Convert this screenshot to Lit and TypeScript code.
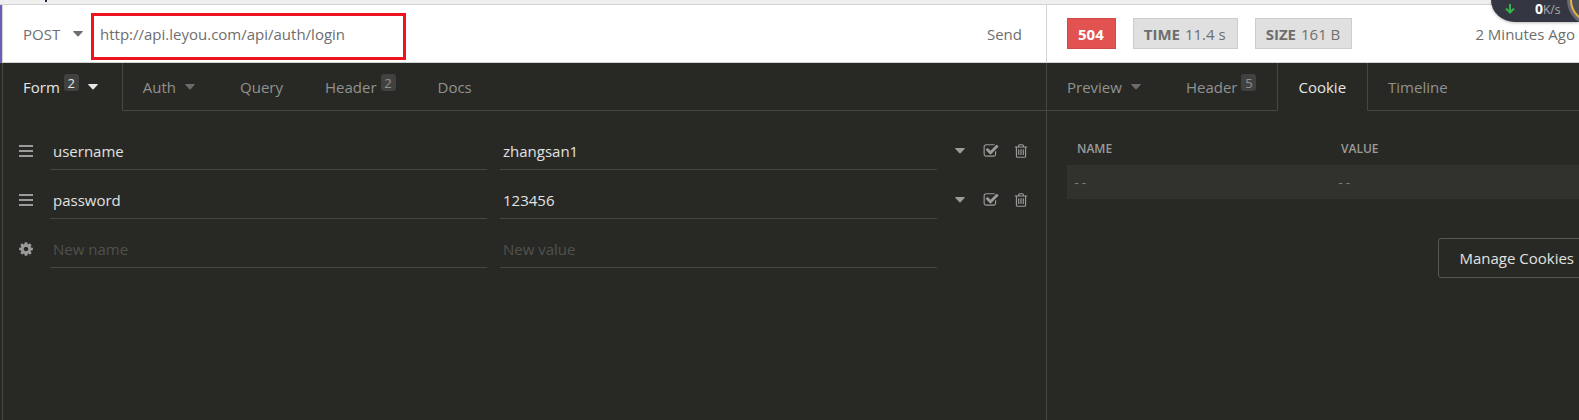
import { LitElement, html, css, svg, nothing } from "lit";
import { customElement, property, state } from "lit/decorators.js";
import { classMap } from "lit/directives/class-map.js";

const CHECK =
  "M1472 930v318q0 119-84.5 203.5t-203.5 84.5h-832q-119 0-203.5-84.5t-84.5-203.5v-832q0-119 84.5-203.5t203.5-84.5h832q63 0 117 25 15 7 18 23 3 17-9 29l-49 49q-10 10-23 10-3 0-9-2-23-6-45-6h-832q-66 0-113 47t-47 113v832q0 66 47 113t113 47h832q66 0 113-47t47-113v-254q0-13 9-22l64-64q10-10 23-10 6 0 12 3 20 8 20 29zm231-489l-814 814q-24 24-57 24t-57-24l-430-430q-24-24-24-57t24-57l110-110q24-24 57-24t57 24l263 263 647-647q24-24 57-24t57 24l110 110q24 24 24 57t-24 57z";
const TRASH =
  "M704 736v576q0 14-9 23t-23 9h-64q-14 0-23-9t-9-23v-576q0-14 9-23t23-9h64q14 0 23 9t9 23zm256 0v576q0 14-9 23t-23 9h-64q-14 0-23-9t-9-23v-576q0-14 9-23t23-9h64q14 0 23 9t9 23zm256 0v576q0 14-9 23t-23 9h-64q-14 0-23-9t-9-23v-576q0-14 9-23t23-9h64q14 0 23 9t9 23zm128 724v-948h-896v948q0 22 7 40.5t14.5 27 10.5 8.5h832q3 0 10.5-8.5t14.5-27 7-40.5zm-672-1076h448l-48-117q-7-9-17-11h-317q-10 2-17 11zm928 32v64q0 14-9 23t-23 9h-96v948q0 83-47 143.5t-113 60.5h-832q-66 0-113-58.5t-47-141.5v-952h-96q-14 0-23-9t-9-23v-64q0-14 9-23t23-9h309l70-167q15-37 54-63t79-26h320q40 0 79 26t54 63l70 167h309q14 0 23 9t9 23z";
const COG =
  "M1152 896q0-106-75-181t-181-75-181 75-75 181 75 181 181 75 181-75 75-181zm512-109v222q0 12-8 23t-20 13l-185 28q-19 54-39 91 35 50 107 138 10 12 10 25t-9 23q-27 37-99 108t-94 71q-12 0-26-9l-138-108q-44 23-91 38-16 136-29 186-7 28-36 28h-222q-14 0-24.5-8.5t-11.5-21.5l-28-184q-49-16-90-37l-141 107q-10 9-25 9-14 0-25-11-126-114-165-168-7-10-7-23 0-12 8-23 15-21 51-66.5t54-70.5q-27-50-41-99l-183-27q-13-2-21-12.5t-8-23.5v-222q0-12 8-23t19-13l186-28q14-46 39-92-40-57-107-138-10-12-10-24 0-10 9-23 26-36 98.5-107.5t94.5-71.5q13 0 26 10l138 107q44-23 91-38 16-136 29-186 7-28 36-28h222q14 0 24.5 8.5t11.5 21.5l28 184q49 16 90 37l142-107q9-9 24-9 13 0 25 10 129 119 165 170 7 8 7 22 0 12-8 23-15 21-51 66.5t-54 70.5q26 50 41 98l183 28q13 2 21 12.5t8 23.5z";

const icon = (d: string) => html`<svg width="16" height="16" viewBox="0 0 1792 1792" fill="currentColor" aria-hidden="true">${svg`<path d=${d}></path>`}</svg>`;
const caret = () => html`<svg class="caret" width="10" height="6" viewBox="0 0 10 6" fill="currentColor" aria-hidden="true"><path d="M0.6 0h8.8q.8 0 .3.7L5.5 5.3q-.5.5-1 0L.3.7Q-.2 0 .6 0z"></path></svg>`;
const bars = () => html`<svg width="16" height="16" viewBox="0 0 16 16" fill="currentColor" aria-hidden="true"><path d="M1 2h14v2H1zM1 7h14v2H1zM1 12h14v2H1z"></path></svg>`;

const base = css`
  * { box-sizing: border-box; }
  button, input, select { font: inherit; color: inherit; background: none; border: 0; margin: 0; padding: 0; border-radius: 0; }
  input:focus, select:focus { outline: none; }
  svg { display: block; flex: none; }
`;

interface Tab { label: string; badge?: number; menu?: boolean; }

@customElement("tab-strip")
class TabStrip extends LitElement {
  @property({ attribute: false }) tabs: Tab[] = [];
  @property() active = "";

  static styles = [base, css`
    :host { display: flex; height: 48px; }
    .tab { display: flex; align-items: center; padding: 0 21px 0 20px; border-right: 1px solid transparent; border-bottom: 1px solid #464742; color: #91928f; line-height: 24px; white-space: nowrap; }
    .tab.before { border-right-color: #464742; }
    .tab.active { color: #e6e6e4; border-bottom-color: transparent; border-right-color: #464742; }
    .caret { margin: 0 3px 0 9px; color: #6b6c69; }
    .active .caret { color: #e6e6e4; }
    .badge { align-self: flex-start; margin: 11px 0 0 4px; width: 15px; height: 17px; border-radius: 3px; background: #41423f; font-size: 13px; line-height: 18px; text-align: center; }
    .fill { flex: 1; border-bottom: 1px solid #464742; }
  `];

  render() {
    return html`
      ${this.tabs.map((t, i) => html`
        <button type="button" class=${classMap({ tab: true, active: t.label === this.active, before: this.tabs[i + 1]?.label === this.active })}
          @click=${() => (this.active = t.label)}>
          <span>${t.label}</span>
          ${t.badge ? html`<span class="badge">${t.badge}</span>` : nothing}
          ${t.menu ? caret() : nothing}
        </button>`)}
      <span class="fill"></span>`;
  }
}

@customElement("param-row")
class ParamRow extends LitElement {
  @property() name = "";
  @property() value = "";
  @property({ type: Boolean }) blank = false;

  static styles = [base, css`
    :host { display: flex; align-items: center; height: 49px; padding: 11px 10px 0 13px; color: #9b9c99; }
    .handle { width: 20px; display: grid; place-items: center; margin-right: 14px; }
    .field { flex: 1 1 0; min-width: 0; height: 38px; padding: 0 3px; margin-right: 13px; border-bottom: 1px solid #464742; color: #e2e2e0; }
    .field::placeholder { color: #50514d; opacity: 1; }
    .tools { width: 86px; display: flex; align-items: center; justify-content: space-between; padding: 0 7px 0 2px; }
    .tool, .check { display: grid; place-items: center; min-width: 16px; height: 24px; }
    .check > * { grid-area: 1 / 1; }
    .check input { appearance: none; width: 16px; height: 16px; }
  `];

  render() {
    return html`
      <button type="button" class="handle" aria-label=${this.blank ? "Options" : "Reorder"}>${this.blank ? icon(COG) : bars()}</button>
      <input class="field" type="text" aria-label="Name" placeholder="New name" .value=${this.name}>
      <input class="field" type="text" aria-label="Value" placeholder="New value" .value=${this.value}>
      <div class="tools">
        ${this.blank ? nothing : html`
          <button type="button" class="tool" aria-label="Value type">${caret()}</button>
          <label class="check">${icon(CHECK)}<input type="checkbox" checked aria-label="Enabled"></label>
          <button type="button" class="tool" aria-label="Delete">${icon(TRASH)}</button>`}
      </div>`;
  }
}

@customElement("app-root")
class AppRoot extends LitElement {
  @state() url = "http://api.leyou.com/api/auth/login";

  static styles = [base, css`
    :host { display: flex; flex-direction: column; position: relative; min-height: 100vh; overflow: hidden; background: #282925; color: #6e6e6e; font: 15px "Open Sans", "Noto Sans", sans-serif; }
    .titlebar { height: 5px; background: #efefef; border-bottom: 1px solid #d2d2d2; }
    .mark { display: block; width: 2px; height: 2px; margin-left: 45px; background: #1d2440; }
    .main { flex: 1; display: grid; grid-template-columns: 2px minmax(0, 1044fr) minmax(0, 533fr); grid-template-rows: 58px 1fr; }
    .accent { background: #6d5fb8; }
    .bar { display: flex; align-items: center; background: #fff; border-left: 1px solid #d2d2d2; border-bottom: 1px solid #d2d4d4; white-space: nowrap; }
    .request { position: relative; padding: 0 24px 0 20px; }
    .method { appearance: none; width: 40px; }
    .method + .caret { margin: 0 17px 0 10px; }
    .url { flex: 1; min-width: 0; height: 40px; }
    .highlight { position: absolute; left: 88px; top: 8px; width: 315px; height: 47px; border: 3px solid #ee1320; pointer-events: none; }
    .response { padding: 0 4px 0 20px; gap: 17px; }
    .tag { display: flex; align-items: center; gap: 5px; height: 31px; padding: 0 11px 0 10px; border: 1px solid #cdcdcd; background: #e0e0e0; }
    .tag.error { border-color: #cf4a4a; background: #e25251; color: #fff; }
    .ago { margin-left: auto; }
    .pane { min-width: 0; border-left: 1px solid #464742; }
    .rows { padding-top: 10px; }
    .cookies { padding: 24px 0 0 20px; margin-right: -16px; }
    table { width: 100%; border-collapse: collapse; table-layout: fixed; }
    th { height: 30px; padding: 0 10px 4px; text-align: left; font-size: 12px; font-weight: 600; color: #9b9c99; }
    td { height: 34px; padding: 3px 6px 0; background: #31322e; color: #7e7f7b; font: 12px "Liberation Mono", monospace; }
    .actions { display: flex; justify-content: flex-end; padding-top: 39px; }
    .manage { height: 40px; padding: 0 20px; border: 1px solid #575853; border-radius: 3px; color: #e2e2e0; white-space: nowrap; }
    .netmeter { position: absolute; top: 0; right: 0; width: 88px; height: 22px; display: flex; align-items: center; overflow: hidden; padding-bottom: 4px; border-bottom-left-radius: 24px 22px; background: #343742; color: #a9abb2; font: 12px "Open Sans", sans-serif; box-shadow: 0 1px 3px #0004; }
    .arrow { margin: 0 20px 0 14px; }
    .rate { display: flex; align-items: baseline; line-height: 18px; }
    .rate b { color: #fff; font-size: 14px; }
    .ring { position: absolute; right: 0; top: 0; }
  `];

  render() {
    return html`
      <header class="titlebar"><span class="mark"></span></header>
      <main class="main">
        <span class="accent"></span>
        <form class="bar request" @submit=${(e: Event) => e.preventDefault()}>
          <select class="method" aria-label="Method"><option selected>POST</option><option>GET</option><option>PUT</option></select>
          ${caret()}
          <input class="url" type="text" aria-label="URL" .value=${this.url}>
          <button type="submit">Send</button>
          <span class="highlight"></span>
        </form>
        <div class="bar response">
          <span class="tag error"><b>504</b></span>
          <span class="tag"><b>TIME</b> 11.4 s</span>
          <span class="tag"><b>SIZE</b> 161 B</span>
          <span class="ago">2 Minutes Ago</span>
        </div>
        <span></span>
        <section class="pane">
          <tab-strip active="Form" .tabs=${[
            { label: "Form", badge: 2, menu: true }, { label: "Auth", menu: true }, { label: "Query" },
            { label: "Header", badge: 2 }, { label: "Docs" }]}></tab-strip>
          <div class="rows">
            <param-row name="username" value="zhangsan1"></param-row>
            <param-row name="password" value="123456"></param-row>
            <param-row blank></param-row>
          </div>
        </section>
        <section class="pane">
          <tab-strip active="Cookie" .tabs=${[
            { label: "Preview", menu: true }, { label: "Header", badge: 5 }, { label: "Cookie" }, { label: "Timeline" }]}></tab-strip>
          <div class="cookies">
            <table>
              <thead><tr><th>NAME</th><th>VALUE</th></tr></thead>
              <tbody><tr><td>--</td><td>--</td></tr></tbody>
            </table>
            <div class="actions"><button type="button" class="manage">Manage Cookies</button></div>
          </div>
        </section>
      </main>
      <aside class="netmeter">
        <svg class="arrow" width="10" height="10" viewBox="0 0 10 10" fill="none" stroke="#35b34a" stroke-width="2"><path d="M5 0v8M1 4.5l4 4 4-4"></path></svg>
        <span class="rate"><b>0</b>K/s</span>
        <svg class="ring" width="12" height="22" viewBox="0 0 12 22"><circle cx="26" cy="0" r="26" fill="#666a75"></circle><circle cx="26" cy="0" r="22" fill="#4b4e59" stroke="#e9b040" stroke-width="2"></circle></svg>
      </aside>`;
  }
}
